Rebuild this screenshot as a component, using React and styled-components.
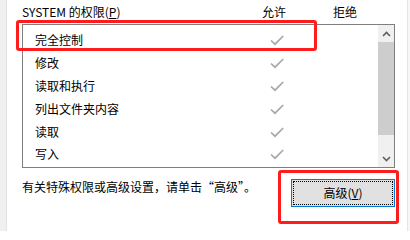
import React from "react";
import styled, { createGlobalStyle } from "styled-components";

const GlobalStyle = createGlobalStyle`
  html, body {
    margin: 0;
    padding: 0;
    background: #ffffff;
  }
  body {
    font-family: "Noto Sans CJK SC", "Noto Sans", sans-serif;
    font-size: 12px;
    color: #000;
  }
`;

const Page = styled.div`
  position: relative;
  display: flex;
  width: 410px;
  height: 231px;
  overflow: hidden;
  background: #fff;
`;

const EdgeStrip = styled.div`
  flex: 0 0 ${(p) => p.$width}px;
  background: ${(p) => p.$bg};
  border-${(p) => p.$side}: 1px solid ${(p) => p.$line};
`;

const Panel = styled.div`
  flex: 1;
  display: flex;
  flex-direction: column;
  padding: 0 12px 0 15px;
`;

const HeaderRow = styled.div`
  display: grid;
  grid-template-columns: 240px 71px 1fr;
  height: 24px;
  align-items: center;
  line-height: 16px;
  padding-bottom: 1px;
  box-sizing: border-box;
`;

const ListBox = styled.div`
  display: flex;
  height: 144px;
  border: 1px solid #7f7f7f;
  box-sizing: border-box;
`;

const Rows = styled.div`
  flex: 1;
  padding-top: 4px;
`;

const Row = styled.div`
  display: grid;
  grid-template-columns: 227px 30px;
  height: 22.8px;
  align-items: center;
  padding-left: 12px;
  line-height: 16px;
`;

const CheckCell = styled.div`
  display: flex;
  justify-content: center;
  align-items: center;
`;

const ScrollBar = styled.div`
  flex: 0 0 16px;
  display: flex;
  flex-direction: column;
  background: #f0f0f0;
`;

const ScrollArrow = styled.div`
  height: 17px;
  display: flex;
  align-items: center;
  justify-content: center;
`;

const ScrollThumb = styled.div`
  height: 93px;
  background: #cdcdcd;
`;

const ScrollTrack = styled.div`
  flex: 1;
`;

const Footer = styled.div`
  display: flex;
  justify-content: space-between;
  align-items: flex-start;
  margin-top: 11px;
`;

const Hint = styled.div`
  line-height: 16px;
`;

const Button = styled.div`
  width: 104px;
  height: 28px;
  box-sizing: border-box;
  border: 1px solid #0078d7;
  padding: 1px;
  background: #e1e1e1;
`;

const FocusRect = styled.div`
  height: 100%;
  box-sizing: border-box;
  border: 1px dotted #000;
  display: flex;
  align-items: center;
  justify-content: center;
  line-height: 16px;
`;

const Highlight = styled.div`
  position: absolute;
  left: ${(p) => p.$x}px;
  top: ${(p) => p.$y}px;
  width: ${(p) => p.$w}px;
  height: ${(p) => p.$h}px;
  box-sizing: border-box;
  border: 3px solid #ff1c1c;
  border-radius: 3px;
  pointer-events: none;
`;

const Check = () => (
  <svg width="16" height="12" viewBox="0 0 16 12">
    <path d="M2 6.5 L6 10.2 L14.2 2" fill="none" stroke="#a8a8a8" strokeWidth="1.7" />
  </svg>
);

const Chevron = ({ up }) => (
  <svg width="9" height="6" viewBox="0 0 9 6">
    <path
      d={up ? "M1 5 L4.5 1.5 L8 5" : "M1 1 L4.5 4.5 L8 1"}
      fill="none"
      stroke="#606060"
      strokeWidth="1.6"
    />
  </svg>
);

const permissions = [
  "完全控制",
  "修改",
  "读取和执行",
  "列出文件夹内容",
  "读取",
  "写入",
];

export default function App() {
  return (
    <>
      <GlobalStyle />
      <Page>
        <EdgeStrip $width={6} $bg="#f0f0f0" $side="right" $line="#e3e3e3" />
        <Panel>
          <HeaderRow>
            <span>
              SYSTEM 的权限(<u>P</u>)
            </span>
            <span>允许</span>
            <span>拒绝</span>
          </HeaderRow>
          <ListBox>
            <Rows>
              {permissions.map((name) => (
                <Row key={name}>
                  <span>{name}</span>
                  <CheckCell>
                    <Check />
                  </CheckCell>
                </Row>
              ))}
            </Rows>
            <ScrollBar>
              <ScrollArrow>
                <Chevron up />
              </ScrollArrow>
              <ScrollThumb />
              <ScrollTrack />
              <ScrollArrow>
                <Chevron />
              </ScrollArrow>
            </ScrollBar>
          </ListBox>
          <Footer>
            <Hint>有关特殊权限或高级设置，请单击“高级”。</Hint>
            <Button>
              <FocusRect>
                <span>
                  高级(<u>V</u>)
                </span>
              </FocusRect>
            </Button>
          </Footer>
        </Panel>
        <EdgeStrip $width={2} $bg="#f7f7f7" $side="left" $line="#e5e5e5" />
        <Highlight $x={16} $y={20} $w={301} $h={31} />
        <Highlight $x={278} $y={170} $w={121} $h={54} />
      </Page>
    </>
  );
}
